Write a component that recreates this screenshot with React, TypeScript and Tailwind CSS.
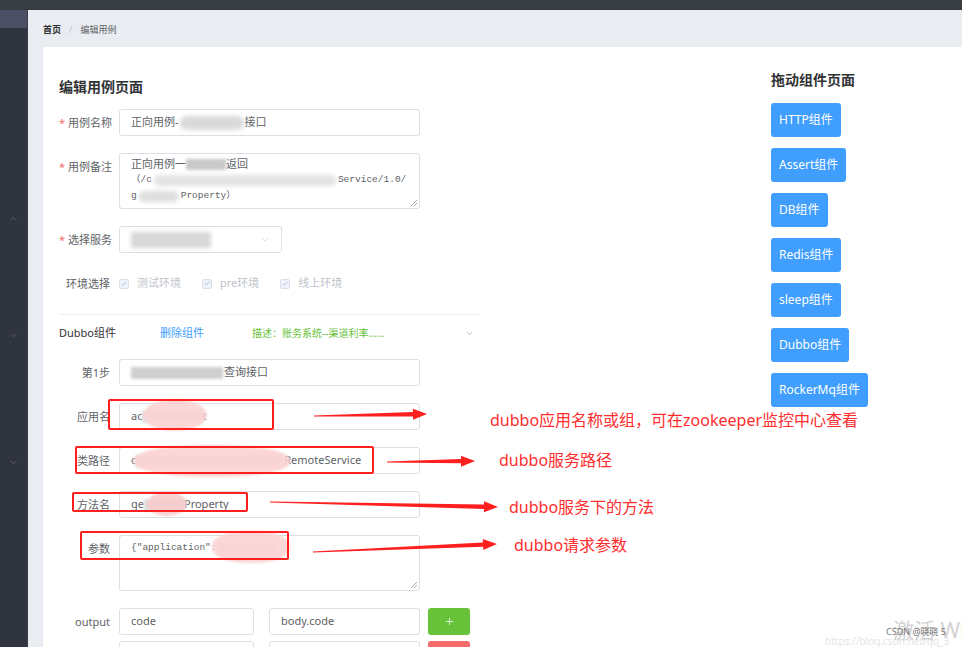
import React from "react";
import { ChevronDown, ChevronUp, Plus } from "lucide-react";

// arrow shape (tapered shaft + head) from tail to tip
const arrowPoints = (x1: number, y1: number, x2: number, y2: number) => {
  const dx = x2 - x1;
  const dy = y2 - y1;
  const len = Math.hypot(dx, dy);
  const ux = dx / len;
  const uy = dy / len;
  const px = -uy;
  const py = ux;
  const headLen = 14;
  const nx = x2 - ux * headLen;
  const ny = y2 - uy * headLen;
  const pts: [number, number][] = [
    [x1 + px * 0.6, y1 + py * 0.6],
    [nx + px * 2.2, ny + py * 2.2],
    [nx + px * 5.5, ny + py * 5.5],
    [x2, y2],
    [nx - px * 5.5, ny - py * 5.5],
    [nx - px * 2.2, ny - py * 2.2],
    [x1 - px * 0.6, y1 - py * 0.6],
  ];
  return pts.map((p) => p.join(",")).join(" ");
};

const arrows = [
  [314, 416, 427, 414],
  [387, 462, 475, 461],
  [270, 502, 498, 507],
  [313, 552, 497, 544],
];

const components = ["HTTP组件", "Assert组件", "DB组件", "Redis组件", "sleep组件", "Dubbo组件", "RockerMq组件"];

const Row: React.FC<{ label: string; required?: boolean; children: React.ReactNode }> = ({ label, required, children }) => (
  <div className="flex items-start">
    <div className="w-[60px] shrink-0 pr-[9px] text-right text-[11px] leading-[27px] text-[#606266] whitespace-nowrap">
      {required && <span className="mr-[3px] text-[#f56c6c]">*</span>}
      {label}
    </div>
    {children}
  </div>
);

const Input: React.FC<{ className?: string; children?: React.ReactNode }> = ({ className = "w-[301px]", children }) => (
  <div
    className={`${className} flex h-[27px] shrink-0 items-center overflow-hidden whitespace-nowrap rounded-[3px] border border-[#dcdfe6] bg-white px-[11px] text-[11px] text-[#606266]`}
  >
    {children}
  </div>
);

const Resize = () => (
  <svg className="absolute bottom-[2px] right-[2px]" width="7" height="7" viewBox="0 0 7 7">
    <path d="M7 1 L1 7 M7 4 L4 7" stroke="#909399" strokeWidth="0.8" />
  </svg>
);

const Check: React.FC<{ label: string }> = ({ label }) => (
  <div className="mr-[21px] flex items-center">
    <div className="flex h-[10px] w-[10px] items-center justify-center rounded-[2px] border border-[#dcdfe6] bg-[#edf2fc]">
      <svg width="6" height="5" viewBox="0 0 6 5">
        <path d="M0.7 2.5 L2.4 4 L5.3 0.8" fill="none" stroke="#c0c4cc" strokeWidth="1" />
      </svg>
    </div>
    <span className="ml-[8px] text-[11px] text-[#c0c4cc]">{label}</span>
  </div>
);

export default function App() {
  return (
    <div className="relative h-[647px] w-[962px] overflow-hidden bg-[#e9ecf1] font-[family-name:Noto_Sans,Noto_Sans_CJK_SC,sans-serif]">
      <div className="h-[10px] bg-[#383d42]" />
      <div className="flex h-[637px]">
        <aside className="flex w-[28px] shrink-0 flex-col items-center border-r border-[#3a3e48] bg-[#30343f]">
          <div className="h-[18px] w-full shrink-0 bg-[#4b5064]" />
          <ChevronUp className="mt-[186px] shrink-0 text-[#7d818c]" size={9} strokeWidth={1.5} />
          <ChevronDown className="mt-[108px] shrink-0 text-[#7d818c]" size={9} strokeWidth={1.5} />
          <ChevronDown className="mt-[118px] shrink-0 text-[#7d818c]" size={9} strokeWidth={1.5} />
        </aside>

        <main className="flex min-h-0 flex-1 flex-col pl-[15px]">
          <div className="flex h-[37px] shrink-0 items-center gap-[8px] pt-[3px] text-[9px]">
            <span className="font-bold text-[#303133]">首页</span>
            <span className="text-[#c0c4cc]">/</span>
            <span className="text-[#606266]">编辑用例</span>
          </div>

          <div className="flex flex-1 shrink-0 bg-white pl-[16px]">
            <div className="w-[420px] shrink-0 pt-[30px]">
              <h2 className="h-[20px] text-[14px] font-bold leading-[20px] text-[#303133]">编辑用例页面</h2>

              <div className="mt-[12px] flex flex-col gap-[17px]">
                <Row label="用例名称" required>
                  <Input>
                    正向用例-
                    <span className="mx-[1px] inline-block h-[14px] w-[64px] rounded-full bg-[#dadada] blur-[2px]" />
                    接口
                  </Input>
                </Row>

                <Row label="用例备注" required>
                  <div className="relative h-[56px] w-[301px] overflow-hidden rounded-[3px] border border-[#dcdfe6] px-[11px] pt-[2px] text-[#606266]">
                    <div className="flex items-center text-[11px] leading-[16px]">
                      正向用例一
                      <span className="inline-block h-[11px] w-[40px] bg-[#c9c9c9] blur-[1.5px]" />
                      返回
                    </div>
                    <div className="flex items-center font-[family-name:Liberation_Mono,Noto_Sans_CJK_SC,monospace] text-[9.5px] leading-[16px]">
                      （/c
                      <span className="mx-[2px] inline-block h-[11px] w-[182px] rounded-full bg-[#e3e3e3] blur-[2px]" />
                      Service/1.0/
                    </div>
                    <div className="flex items-center font-[family-name:Liberation_Mono,Noto_Sans_CJK_SC,monospace] text-[9.5px] leading-[16px]">
                      g
                      <span className="mx-[2px] inline-block h-[11px] w-[40px] rounded-full bg-[#dedede] blur-[2px]" />
                      Property）
                    </div>
                    <Resize />
                  </div>
                </Row>

                <Row label="选择服务" required>
                  <Input className="w-[163px]">
                    <span className="inline-block h-[16px] w-[80px] bg-[#d8d8d8] blur-[2px]" />
                    <ChevronDown className="ml-auto text-[#c0c4cc]" size={10} strokeWidth={1.5} />
                  </Input>
                </Row>

                <Row label="环境选择">
                  <div className="flex h-[27px] items-center">
                    <Check label="测试环境" />
                    <Check label="pre环境" />
                    <Check label="线上环境" />
                  </div>
                </Row>
              </div>

              <div className="mt-[17px] h-px bg-[#ebeef5]" />

              <div className="flex h-[36px] items-center pr-[5px] text-[11px]">
                <span className="w-[101px] text-[#303133]">Dubbo组件</span>
                <span className="w-[92px] text-[#409eff]">删除组件</span>
                <span className="text-[10px] text-[#67c23a]">描述：账务系统--渠道利率......</span>
                <ChevronDown className="ml-auto text-[#909399]" size={9} strokeWidth={1.5} />
              </div>

              <div className="mt-[8px] flex flex-col gap-[17px]">
                <Row label="第1步">
                  <Input>
                    <span className="mr-[1px] inline-block h-[12px] w-[92px] bg-[#cfcfcf] blur-[1.5px]" />
                    查询接口
                  </Input>
                </Row>
                <Row label="应用名">
                  <Input>
                    ac
                    <span className="inline-block h-[12px] w-[60px] bg-[#dcdcdc] blur-[1.5px]" />
                    t
                  </Input>
                </Row>
                <Row label="类路径">
                  <Input>
                    c
                    <span className="mr-[1px] inline-block h-[12px] w-[147px] bg-[#dcdcdc] blur-[1.5px]" />
                    RemoteService
                  </Input>
                </Row>
                <Row label="方法名">
                  <Input>
                    ge
                    <span className="inline-block h-[12px] w-[40px] bg-[#dcdcdc] blur-[1.5px]" />
                    Property
                  </Input>
                </Row>
                <Row label="参数">
                  <div className="relative h-[56px] w-[301px] rounded-[3px] border border-[#dcdfe6] px-[11px] pt-[4px]">
                    <div className="flex items-center font-[family-name:Liberation_Mono,monospace] text-[9.5px] leading-[16px] text-[#606266]">
                      {'{"application":'}
                      <span className="ml-[2px] inline-block h-[11px] w-[56px] bg-[#e0e0e0] blur-[1.5px]" />
                    </div>
                    <Resize />
                  </div>
                </Row>
                <Row label="output">
                  <div className="flex items-center">
                    <Input className="w-[135px]">code</Input>
                    <Input className="ml-[15px] w-[151px]">body.code</Input>
                    <div className="ml-[8px] flex h-[27px] w-[42px] items-center justify-center rounded-[3px] bg-[#67c23a] text-white">
                      <Plus size={11} strokeWidth={1.6} />
                    </div>
                  </div>
                </Row>
              </div>

              <div className="mt-[6px] flex pl-[60px]">
                <Input className="w-[135px]" />
                <Input className="ml-[15px] w-[151px]" />
                <div className="ml-[8px] h-[27px] w-[42px] rounded-[3px] bg-[#f56c6c]" />
              </div>
            </div>

            <div className="ml-[292px] flex flex-col items-start pt-[23px]">
              <h3 className="h-[20px] text-[14px] font-bold leading-[20px] text-[#303133]">拖动组件页面</h3>
              <div className="mt-[13px] flex flex-col items-start gap-[11px]">
                {components.map((c) => (
                  <div
                    key={c}
                    className="flex h-[34px] items-center rounded-[3px] bg-[#409eff] px-[8px] text-[12px] text-white"
                  >
                    {c}
                  </div>
                ))}
              </div>
            </div>
          </div>
        </main>
      </div>

      {/* redaction smears */}
      <div className="pointer-events-none absolute left-[143px] top-[399px] h-[32px] w-[64px] rounded-[50%] bg-[#fbd3d3] opacity-90 blur-[1px]" />
      <div className="pointer-events-none absolute left-[134px] top-[445px] h-[32px] w-[156px] rounded-[45%] bg-[#fbd3d3] opacity-90 blur-[1px]" />
      <div className="pointer-events-none absolute left-[147px] top-[492px] h-[24px] w-[40px] rounded-[50%] bg-[#f8cccc] opacity-90 blur-[1px]" />
      <div className="pointer-events-none absolute left-[212px] top-[531px] h-[32px] w-[78px] rounded-[45%] bg-[#fbd3d3] opacity-90 blur-[1px]" />

      {/* annotation boxes */}
      <div className="pointer-events-none absolute left-[108px] top-[399px] h-[31px] w-[166px] rounded-[2px] border-2 border-[#ff1f1f]" />
      <div className="pointer-events-none absolute left-[75px] top-[446px] h-[28px] w-[299px] rounded-[2px] border-2 border-[#ff1f1f]" />
      <div className="pointer-events-none absolute left-[72px] top-[492px] h-[20px] w-[176px] rounded-[2px] border-2 border-[#ff1f1f]" />
      <div className="pointer-events-none absolute left-[80px] top-[531px] h-[29px] w-[209px] rounded-[2px] border-2 border-[#ff1f1f]" />

      <svg className="pointer-events-none absolute left-0 top-0" width="962" height="647">
        {arrows.map((a, i) => (
          <polygon key={i} points={arrowPoints(a[0], a[1], a[2], a[3])} fill="#ff1f1f" />
        ))}
      </svg>

      <div className="pointer-events-none absolute left-[490px] top-[409px] whitespace-nowrap text-[16px] leading-[22px] text-[#ff2d2d]">
        dubbo应用名称或组，可在zookeeper监控中心查看
      </div>
      <div className="pointer-events-none absolute left-[499px] top-[449px] whitespace-nowrap text-[16px] leading-[22px] text-[#ff2d2d]">
        dubbo服务路径
      </div>
      <div className="pointer-events-none absolute left-[509px] top-[496px] whitespace-nowrap text-[16px] leading-[22px] text-[#ff2d2d]">
        dubbo服务下的方法
      </div>
      <div className="pointer-events-none absolute left-[514px] top-[534px] whitespace-nowrap text-[16px] leading-[22px] text-[#ff2d2d]">
        dubbo请求参数
      </div>

      {/* watermark */}
      <div className="pointer-events-none absolute left-[825px] top-[635px] whitespace-nowrap text-[10px] leading-[12px] text-[#e4e4e4]">
        https://blog.csdn.net/qq_3
      </div>
      <div className="pointer-events-none absolute left-[893px] top-[617px] whitespace-nowrap text-[21px] leading-[26px] text-[#d2d2d2]">
        激活 Wi
      </div>
      <div className="pointer-events-none absolute left-[886px] top-[626px] whitespace-nowrap text-[9px] leading-[12px] text-[#777]">
        CSDN @晓晓 5
      </div>
    </div>
  );
}
